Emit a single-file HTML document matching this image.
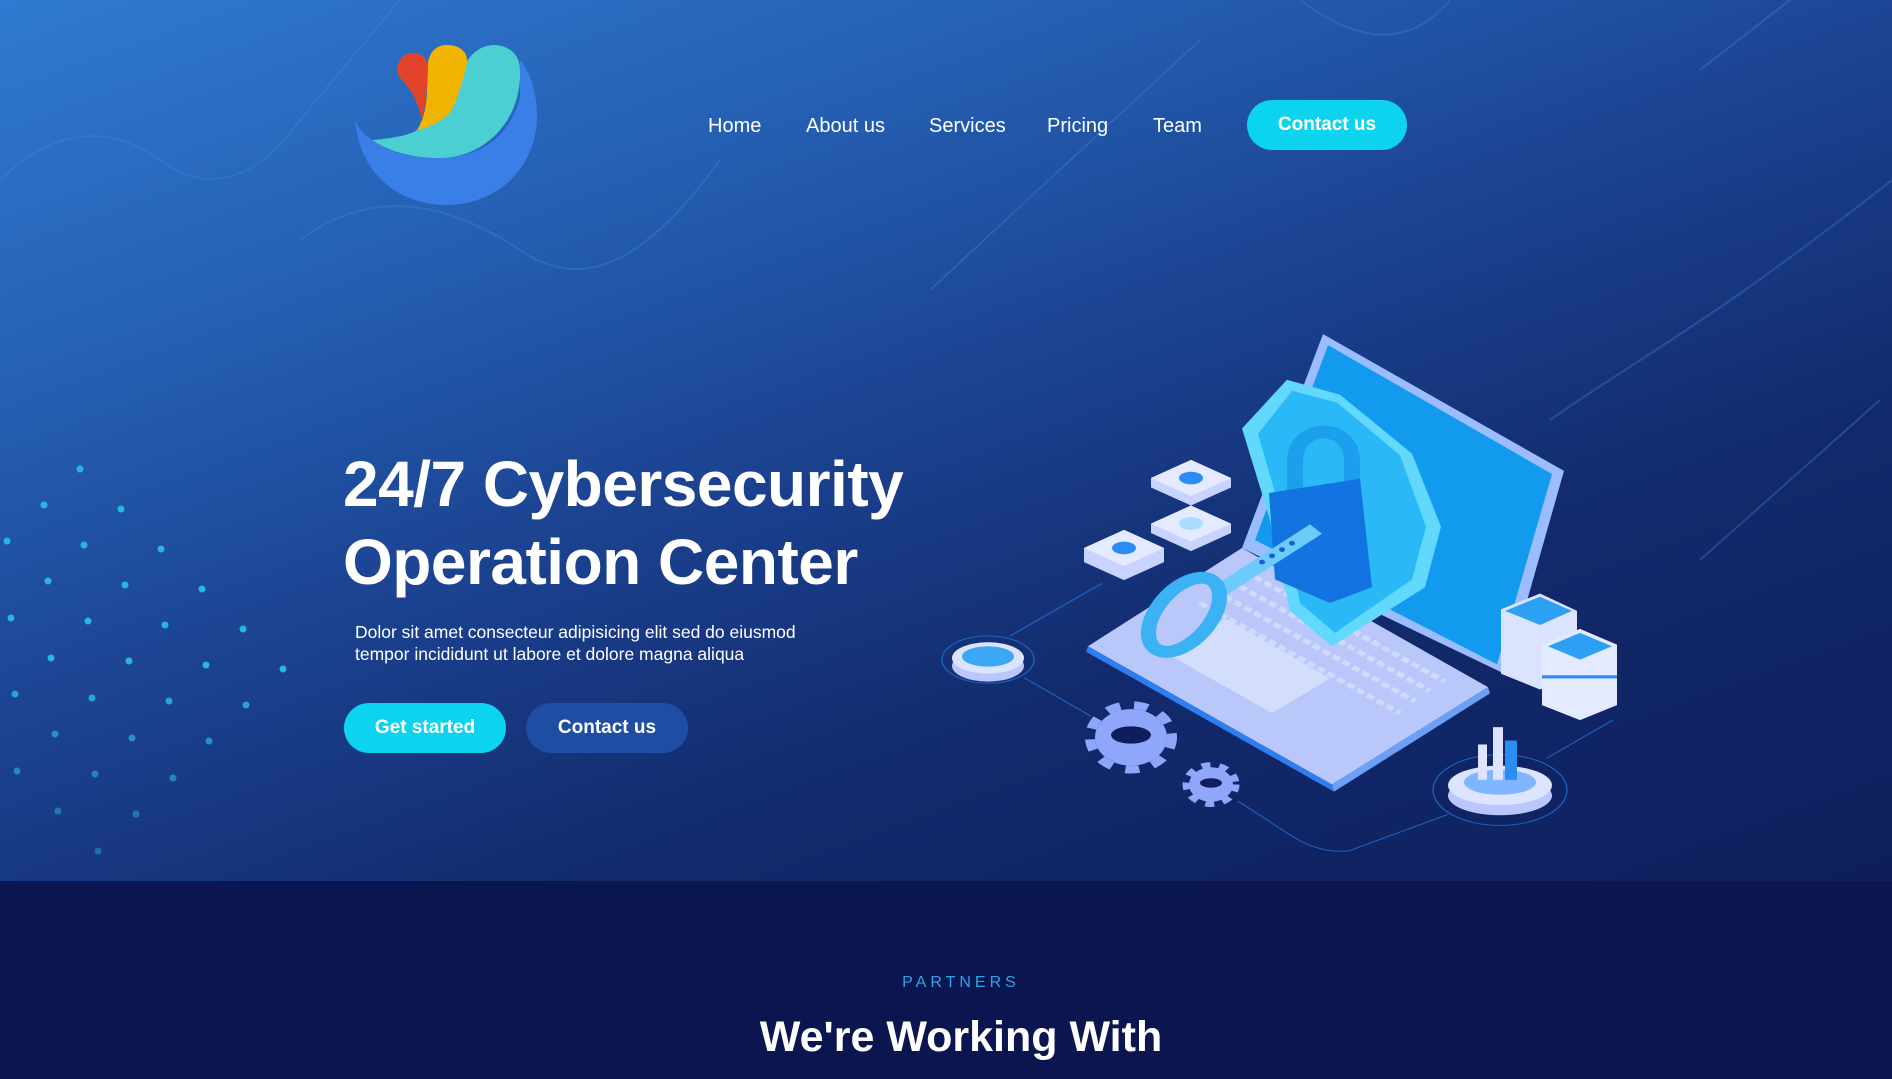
<!DOCTYPE html>
<html><head><meta charset="utf-8"><style>
*{margin:0;padding:0;box-sizing:border-box}
body{width:1892px;height:1079px;overflow:hidden;font-family:"Liberation Sans",sans-serif;background:#0b1650;position:relative}
.hero{position:absolute;left:0;top:0;width:1892px;height:881px;background:linear-gradient(160deg,#2f7ad0 0%,#2560b4 25%,#1a3f8c 50%,#122a6c 70%,#0e1e5c 100%)}
.nav a{position:absolute;top:115px;color:#fff;font-size:20px;text-decoration:none}
.btn{position:absolute;border-radius:25px;color:#fff;font-weight:bold;font-size:19px;display:flex;align-items:center;justify-content:center}
h1{position:absolute;left:343px;top:445px;color:#fff;font-size:64px;line-height:78px;font-weight:bold;letter-spacing:-0.5px}
p.d{position:absolute;left:355px;top:621px;color:#fff;font-size:17.5px;line-height:22px}
</style></head><body>
<div class="hero"></div>
<svg width="1892" height="881" style="position:absolute;left:0;top:0">
<g stroke="#3f86d6" stroke-width="2" fill="none" opacity="0.35">
<path d="M0 180 C60 120 120 130 160 160 S250 190 300 120 L400 0"/>
<path d="M300 240 C380 180 460 210 520 250 S640 270 720 160"/>
<path d="M930 290 L1200 40"/><path d="M1450 0 C1400 60 1340 30 1300 0"/>
<path d="M1700 70 L1790 0"/><path d="M1700 560 L1880 400"/>
<path d="M1550 420 C1650 350 1700 330 1892 180"/>
</g>
<g fill="#29b5e0">
<circle cx="80" cy="469" r="3.5"/><circle cx="44" cy="505" r="3.5"/><circle cx="121" cy="509" r="3.5"/><circle cx="7" cy="541" r="3.5"/><circle cx="84" cy="545" r="3.5"/><circle cx="161" cy="549" r="3.5"/><circle cx="48" cy="581" r="3.5"/><circle cx="125" cy="585" r="3.5"/><circle cx="202" cy="589" r="3.5"/><circle cx="11" cy="618" r="3.5"/><circle cx="88" cy="621" r="3.5"/><circle cx="165" cy="625" r="3.5"/><circle cx="243" cy="629" r="3.5"/><circle cx="51" cy="658" r="3.5"/><circle cx="129" cy="661" r="3.5"/><circle cx="206" cy="665" r="3.5"/><circle cx="283" cy="669" r="3.5"/><circle cx="15" cy="694" r="3.5" opacity=".85"/><circle cx="92" cy="698" r="3.5" opacity=".85"/><circle cx="169" cy="701" r="3.5" opacity=".85"/><circle cx="246" cy="705" r="3.5" opacity=".85"/><circle cx="55" cy="734" r="3.5" opacity=".7"/><circle cx="132" cy="738" r="3.5" opacity=".7"/><circle cx="209" cy="741" r="3.5" opacity=".7"/><circle cx="17" cy="771" r="3.5" opacity=".6"/><circle cx="95" cy="774" r="3.5" opacity=".6"/><circle cx="173" cy="778" r="3.5" opacity=".6"/><circle cx="58" cy="811" r="3.5" opacity=".5"/><circle cx="136" cy="814" r="3.5" opacity=".5"/><circle cx="98" cy="851" r="3.5" opacity=".45"/>
</g>
<!-- logo -->
<path d="M355 120 C360 175 400 205 446 205 C500 205 538 165 537 113 C536 90 530 72 520 60 L520 97 C510 140 475 158 440 158 C405 158 385 150 373 140 C365 136 358 128 355 120Z" fill="#3a7fe8"/>
<path d="M373 140 C395 138 410 135 417 130 C440 110 455 75 470 57 C478 48 486 45 495 45 C510 46 520 55 520 70 C522 120 485 158 440 158 C410 158 385 150 373 140Z" fill="#4ccfd2"/>
<path d="M417 130 C430 110 426 85 428 63 C430 50 438 45 447 45 C460 45 468 52 467 63 C462 85 455 105 450 113 C440 122 428 128 417 130Z" fill="#f2b400"/>
<path d="M422 120 C418 100 408 85 400 78 C393 68 400 53 413 53 C423 53 428 60 428 70 C427 85 426 105 422 120Z" fill="#e4432b"/>
<!-- illustration -->
<g transform="matrix(1 0 0 0.786 0 68.5)">
<g fill="none" stroke="#1e6fd0" stroke-width="1.3" opacity=".85">
<path d="M1010 722 L1102 655 M1024 775 L1091 824 M1238 932 L1290 975 Q1320 1000 1350 995 L1448 949 M1546 878 L1613 829"/>
<ellipse cx="988" cy="752" rx="46" ry="30"/><ellipse cx="1500" cy="918" rx="67" ry="45"/>
</g>
<polygon points="1088,735 1242,610 1488,787 1332,911" fill="#b9c7fb"/>
<polygon points="1088,735 1332,911 1334,920 1086,742" fill="#2e7ef0"/>
<polygon points="1332,911 1488,787 1490,795 1334,920" fill="#6aa0f5"/>
<polygon points="1165,743 1225,700 1330,776 1272,820" fill="#d3defd"/>
<g stroke="#d3defd" stroke-width="6" stroke-dasharray="8 4" opacity=".9"><path d="M1200 680 L1400 820 M1215 665 L1415 805 M1230 652 L1430 792 M1245 640 L1445 780"/></g>
<polygon points="1242,610 1323,338 1564,512 1506,771" fill="#9bbcff"/>
<polygon points="1255,600 1328,352 1552,516 1497,758" fill="#129aee"/>
<g><polygon points="1501,688 1540,668 1577,690 1577,770 1540,790 1501,770" fill="#dbe3ff"/><polygon points="1505,690 1540,672 1572,690 1540,708" fill="#2ea0f4"/>
<polygon points="1542,733 1580,713 1617,733 1617,810 1580,829 1542,810" fill="#e4eaff"/><polygon points="1548,735 1580,718 1612,735 1580,752" fill="#2ea0f4"/><rect x="1542" y="772" width="75" height="4" fill="#2e8af2"/></g>
<polygon points="1287,396 1340,415 1412,490 1441,583 1425,660 1332,735 1290,690 1269,570 1242,458" fill="#62d8fc"/>
<polygon points="1292,410 1337,425 1400,492 1426,583 1412,650 1335,718 1300,680 1282,570 1258,465" fill="#2ab8f6"/>
<path d="M1295 540 L1295 500 C1295 450 1352 450 1352 500 L1352 540" stroke="#1c9fec" stroke-width="16" fill="none"/>
<polygon points="1269,540 1360,522 1372,660 1330,680 1275,650" fill="#1373e0"/>
<polygon points="1212,660 1310,580 1322,592 1224,672" fill="#6ccbf9"/>
<g fill="#1a5fc8"><circle cx="1262" cy="628" r="3"/><circle cx="1272" cy="620" r="3"/><circle cx="1282" cy="612" r="3"/><circle cx="1292" cy="604" r="3"/></g>
<ellipse cx="1184" cy="695" rx="28" ry="52" transform="rotate(30 1184 695)" fill="none" stroke="#3ab2f4" stroke-width="15"/>
<g fill="#c9d3ff">
<polygon points="1151,521 1191,498 1231,521 1231,533 1191,556 1151,533"/>
<polygon points="1151,579 1191,556 1231,579 1231,591 1191,614 1151,591"/>
<polygon points="1084,610 1124,587 1164,610 1164,628 1124,651 1084,628"/>
</g>
<g fill="#e4eaff"><polygon points="1151,521 1191,498 1231,521 1191,544"/><polygon points="1151,579 1191,556 1231,579 1191,602"/><polygon points="1084,610 1124,587 1164,610 1124,633"/></g>
<g fill="#2b8cf2"><ellipse cx="1191" cy="521" rx="12" ry="8"/><ellipse cx="1191" cy="579" rx="12" ry="8" fill="#a9dcff"/><ellipse cx="1124" cy="610" rx="12" ry="8"/></g>
<ellipse cx="988" cy="760" rx="36" ry="20" fill="#b9c6ff"/><ellipse cx="988" cy="750" rx="36" ry="20" fill="#dbe3ff"/><ellipse cx="988" cy="748" rx="26" ry="13" fill="#3ba8f5"/>
<circle cx="1131" cy="851" r="36" fill="#8fa6fb"/><circle cx="1131" cy="851" r="41" fill="none" stroke="#8fa6fb" stroke-width="10" stroke-dasharray="14 14"/>
<ellipse cx="1131" cy="848" rx="20" ry="11" fill="#0e1e5c"/>
<circle cx="1211" cy="911" r="22" fill="#8fa6fb"/><circle cx="1211" cy="911" r="25" fill="none" stroke="#8fa6fb" stroke-width="7" stroke-dasharray="9 9"/>
<ellipse cx="1211" cy="909" rx="11" ry="6" fill="#0e1e5c"/>
<ellipse cx="1500" cy="925" rx="52" ry="25" fill="#b9c6ff"/><ellipse cx="1500" cy="912" rx="52" ry="25" fill="#dce4ff"/><ellipse cx="1500" cy="908" rx="36" ry="16" fill="#7fb6ff"/>
<g fill="#dce4ff"><rect x="1478" y="860" width="9" height="45"/><rect x="1493" y="838" width="10" height="67"/><rect x="1505" y="855" width="12" height="50" fill="#2b8cf2"/></g>
</g>
</svg>
<div class="nav"><a style="left:708px">Home</a><a style="left:806px">About us</a><a style="left:929px">Services</a><a style="left:1047px">Pricing</a><a style="left:1153px">Team</a></div>
<div class="btn" style="left:1247px;top:100px;width:160px;height:50px;background:#0cd3ee">Contact us</div>
<h1>24/7 Cybersecurity<br>Operation Center</h1>
<p class="d">Dolor sit amet consecteur adipisicing elit sed do eiusmod<br>tempor incididunt ut labore et dolore magna aliqua</p>
<div class="btn" style="left:344px;top:703px;width:162px;height:50px;background:#0cd3ee">Get started</div>
<div class="btn" style="left:526px;top:703px;width:162px;height:50px;background:#1e4da3">Contact us</div>
<div style="position:absolute;left:0;width:1922px;top:974px;text-align:center;color:#2ea5e6;font-size:16px;letter-spacing:4px">PARTNERS</div>
<div style="position:absolute;left:0;width:1922px;top:1013px;text-align:center;color:#fff;font-size:43px;font-weight:bold">We're Working With</div>
</body></html>
